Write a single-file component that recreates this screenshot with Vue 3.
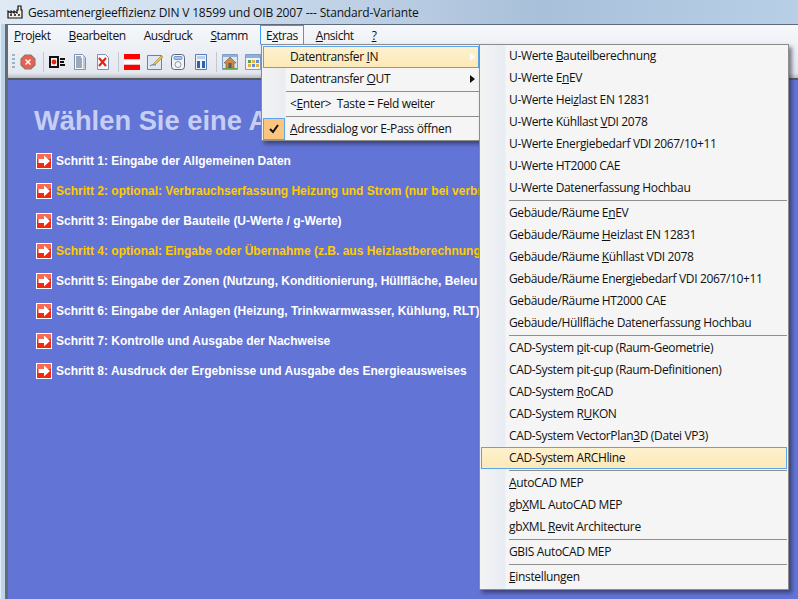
<script setup>
// Menüeinträge: & markiert den unterstrichenen Buchstaben, null ist ein Trennstrich
const menuBar = [
  { label: '&Projekt' },
  { label: '&Bearbeiten' },
  { label: 'Aus&druck' },
  { label: '&Stamm' },
  { label: 'E&xtras', open: true },
  { label: '&Ansicht' },
  { label: '&?' }
]

const extras = [
  { label: 'Datentransfer &IN', active: true, arrow: true },
  { label: 'Datentransfer &OUT', arrow: true },
  null,
  { label: '<&Enter>  Taste = Feld weiter' },
  null,
  { label: '&Adressdialog vor E-Pass öffnen', checked: true }
]

const transfer = [
  'U-Werte &Bauteilberechnung',
  'U-Werte E&nEV',
  'U-Werte Hei&zlast EN 12831',
  'U-Werte Kühllast &VDI 2078',
  'U-Werte Ener&giebedarf VDI 2067/10+11',
  'U-Werte HT2000 CAE',
  'U-Werte Datenerfassung Hochbau',
  null,
  'Gebäude/Räume E&nEV',
  'Gebäude/Räume &Heizlast EN 12831',
  'Gebäude/Räume &Kühllast VDI 2078',
  'Gebäude/Räume Energ&iebedarf VDI 2067/10+11',
  'Gebäude/Räume HT2000 CAE',
  'Gebäude/Hüllfläche Datenerfassung Hochbau',
  null,
  'CAD-System &pit-cup (Raum-Geometrie)',
  'CAD-System pit-&cup (Raum-Definitionen)',
  'CAD-System &RoCAD',
  'CAD-System R&UKON',
  'CAD-System VectorPlan&3D (Datei VP3)',
  'CAD-System ARCHline',
  null,
  '&AutoCAD MEP',
  'gb&XML AutoCAD MEP',
  'gbXML &Revit Architecture',
  null,
  'GBIS AutoCAD MEP',
  null,
  '&Einstellungen'
]

// Texte enden dort, wo das geöffnete Menü sie verdeckt
const steps = [
  { text: 'Schritt 1: Eingabe der Allgemeinen Daten' },
  { text: 'Schritt 2: optional: Verbrauchserfassung Heizung und Strom (nur bei verbra', optional: true },
  { text: 'Schritt 3: Eingabe der Bauteile (U-Werte / g-Werte)' },
  { text: 'Schritt 4: optional: Eingabe oder Übernahme (z.B. aus Heizlastberechnung', optional: true },
  { text: 'Schritt 5: Eingabe der Zonen (Nutzung, Konditionierung, Hüllfläche, Beleu' },
  { text: 'Schritt 6: Eingabe der Anlagen (Heizung, Trinkwarmwasser, Kühlung, RLT)' },
  { text: 'Schritt 7: Kontrolle und Ausgabe der Nachweise' },
  { text: 'Schritt 8: Ausdruck der Ergebnisse und Ausgabe des Energieausweises' }
]

const split = (label) => {
  const i = label.indexOf('&')
  if (i < 0) return { before: label, key: '', after: '' }
  return { before: label.slice(0, i), key: label[i + 1], after: label.slice(i + 2) }
}
</script>

<template>
  <div class="screen">
    <header class="titlebar">
      <svg class="app-icon" width="17" height="14" viewBox="0 0 17 14">
        <path d="M1 13V6l3 2V6l3 2V6l3 2V5h1V1h3v4h1v8z" fill="#f4f1e4" stroke="#111" stroke-width="1.2" />
        <path d="M3 10h2M7 10h2M11 10h2" stroke="#111" stroke-width="1.4" />
      </svg>
      <span>Gesamtenergieeffizienz DIN V 18599 und OIB 2007 --- Standard-Variante</span>
    </header>

    <div class="window">
      <nav class="menubar">
        <span v-for="item in menuBar" :key="item.label" class="menu-title" :class="{ open: item.open }">
          <span>{{ split(item.label).before }}<u>{{ split(item.label).key }}</u>{{ split(item.label).after }}</span>
        </span>
      </nav>

      <div class="toolbar">
        <span class="grip"></span>
        <svg class="tool" viewBox="0 0 16 16">
          <path d="M5 1h6l4 4v6l-4 4H5l-4-4V5z" fill="#e8604e" stroke="#8a7a70" stroke-width="1.2" />
          <path d="M5.500 5.500l5 5M10.500 5.500l-5 5" stroke="#fff" stroke-width="1.4" />
        </svg>
        <span class="tool-sep"></span>
        <svg class="tool" viewBox="0 0 16 16">
          <path d="M0 2h10v12H0z" fill="#111" />
          <path d="M2 4h6v8H2z" fill="#f1efe6" />
          <circle cx="5" cy="8" r="2.4" fill="#e02a1c" />
          <path d="M11 4h5v2h-5zM11 7h4v2h-4zM11 10h5v2h-5z" fill="#111" />
        </svg>
        <svg class="tool" viewBox="0 0 16 16">
          <path d="M2.500 .5h8l3 3v12h-11z" fill="#f6f8fb" stroke="#7d93b2" />
          <path d="M11 1v14l2-1V4z" fill="#b6c8de" />
          <path d="M4 3h5M4 5h6M4 7h6M4 9h6M4 11h6M4 13h6" stroke="#44597a" />
        </svg>
        <svg class="tool" viewBox="0 0 16 16">
          <path d="M2.500 .5h8l3 3v12h-11z" fill="#f6f8fb" stroke="#7d93b2" />
          <path d="M4 4l7 8M11 4l-7 8" stroke="#e0281a" stroke-width="2.200" />
        </svg>
        <span class="tool-sep"></span>
        <svg class="tool" viewBox="0 0 16 16">
          <path d="M0 0h16v5.500H0zM0 10.500h16V16H0z" fill="#fe0000" />
          <path d="M0 5.500h16v5H0z" fill="#fff" />
        </svg>
        <svg class="tool" viewBox="0 0 16 16">
          <path d="M.5 1.500h14v14H.5z" fill="#dce8f6" stroke="#5b85bd" />
          <path d="M3 12c2-2 4-1 6-1" stroke="#5b6f90" fill="none" />
          <path d="M7 9l7-7 2 1-7 7-3 1z" fill="#eec24a" stroke="#a08028" stroke-width=".6" />
        </svg>
        <svg class="tool" viewBox="0 0 16 16">
          <rect x="1.500" y=".5" width="13" height="15" rx="3" fill="#f3f5f8" stroke="#5a6475" />
          <rect x="4" y="2.500" width="8" height="3" rx="1" fill="#a9c6ee" stroke="#4b78c0" stroke-width=".7" />
          <circle cx="8" cy="10.500" r="3" fill="#f3f5f8" stroke="#8b95a5" />
        </svg>
        <svg class="tool" viewBox="0 0 16 16">
          <path d="M2.500 .5h11v15h-11z" fill="#eef3fa" stroke="#5a7fb5" />
          <path d="M4 2h8v3H4z" fill="#b9cfea" />
          <path d="M4 7h3v7H4zM9 7h3v7H9z" fill="#2f64ad" />
        </svg>
        <span class="tool-sep"></span>
        <svg class="tool" viewBox="0 0 16 16">
          <path d="M.5 .5h15v15H.5z" fill="#dbe6f4" stroke="#7f9cc4" />
          <path d="M1 1h14v2H1z" fill="#8fb0dc" />
          <path d="M8 3L2 9h2v5h8V9h2z" fill="#c98a4a" stroke="#7a5530" stroke-width=".6" />
          <path d="M6.500 9h3v5h-3z" fill="#5a5a5a" />
          <path d="M1 14h14v1H1z" fill="#6aa84f" />
        </svg>
        <svg class="tool" viewBox="0 0 16 16">
          <path d="M.5 .5h15v15H.5z" fill="#eef3fa" stroke="#7f9cc4" />
          <path d="M1 1h14v3H1z" fill="#8fb0dc" />
          <path d="M3 6h3v3H3z" fill="#5aa050" />
          <path d="M7 6h3v3H7z" fill="#e8b040" />
          <path d="M11 6h3v3h-3z" fill="#5f8fd0" />
          <path d="M3 10h3v3H3z" fill="#e8b040" />
          <path d="M7 10h3v3H7z" fill="#5f8fd0" />
          <path d="M11 10h3v3h-3z" fill="#e8b040" />
        </svg>
      </div>

      <main class="content">
        <h1 class="headline">Wählen Sie eine A</h1>
        <ul class="steps">
          <li v-for="step in steps" :key="step.text" class="step" :class="{ optional: step.optional }">
            <svg class="step-icon" viewBox="0 0 16 16">
              <rect x=".5" y=".5" width="15" height="15" fill="#ee2a12" stroke="#fff" />
              <path d="M1 1h14v5H1z" fill="#fb6a50" />
              <path d="M2.500 6h5.500V2.500L14 8l-6 5.500V10H2.500z" fill="#fff" />
            </svg>
            <span>{{ step.text }}</span>
          </li>
        </ul>
      </main>
    </div>

    <!-- aufgeklappte Menüs -->
    <div class="popup extras">
      <template v-for="(item, i) in extras" :key="i">
        <div v-if="!item" class="popup-sep"></div>
        <div v-else class="popup-item" :class="{ active: item.active }">
          <span v-if="item.checked" class="check">
            <svg width="12" height="10" viewBox="0 0 12 10">
              <path d="M2 5l3 3 5-7" fill="none" stroke="#111" stroke-width="2" />
            </svg>
          </span>
          <span class="label">{{ split(item.label).before }}<u>{{ split(item.label).key }}</u>{{ split(item.label).after }}</span>
          <i v-if="item.arrow" class="arrow"></i>
        </div>
      </template>
    </div>

    <div class="popup transfer">
      <template v-for="(label, i) in transfer" :key="i">
        <div v-if="!label" class="popup-sep"></div>
        <div v-else class="popup-item" :class="{ active: label === 'CAD-System ARCHline' }">
          <span class="label">{{ split(label).before }}<u>{{ split(label).key }}</u>{{ split(label).after }}</span>
        </div>
      </template>
    </div>
  </div>
</template>

<style scoped>
.screen {
  position: relative;
  display: flex;
  flex-direction: column;
  width: 798px;
  height: 599px;
  overflow: hidden;
  background: linear-gradient(90deg, #e4eef7 0 1px, #bdd5ec 1px);
  font-family: "Open Sans", "Noto Sans", sans-serif;
  font-size: 12px;
  color: #111;
}

.titlebar {
  display: flex;
  align-items: center;
  gap: 4px;
  height: 24px;
  padding-left: 7px;
  background: linear-gradient(90deg, #dfeaf5 0, #cfdeee 200px, #a9c0da 540px, #b8cfe8 798px);
  letter-spacing: -0.17px;
}

.app-icon {
  flex: none;
}

.window {
  flex: 1;
  display: flex;
  flex-direction: column;
  min-height: 0;
  margin-left: 5px;
  border-top: 1px solid #5f6b7a;
  border-left: 3px solid #666b70;
}

.menubar {
  display: flex;
  height: 20px;
  background: linear-gradient(#f6f8fb, #eef1f5);
  letter-spacing: -0.45px;
}

.menu-title {
  display: flex;
  align-items: center;
  white-space: pre;
  padding: 0 5px;
  margin-right: 6px;
  border: 1px solid transparent;
}

.menu-title.open {
  background: #f5f7fa;
  border-color: #3d9af0;
  border-bottom-color: transparent;
}

.toolbar {
  display: flex;
  align-items: center;
  height: 33px;
  padding-left: 4px;
  background: linear-gradient(#eef1f6, #e4e8ee 85%, #b8bcc2);
  border-bottom: 2px solid #555a60;
}

.grip {
  width: 3px;
  height: 16px;
  margin-right: 5px;
  background: repeating-linear-gradient(#9fb2cc 0 2px, transparent 2px 4px);
}

.tool {
  flex: none;
  width: 16px;
  height: 16px;
  margin-right: 7px;
}

.tool-sep {
  flex: none;
  width: 1px;
  height: 20px;
  margin-right: 5px;
  background: #c3c8d0;
}

.content {
  flex: 1;
  padding: 24px 0 0 28px;
  background: #6274d6;
  overflow: hidden;
  white-space: nowrap;
}

.headline {
  height: 34px;
  margin: 0 0 15px -2px;
  font-family: "Liberation Sans", Arial, sans-serif;
  font-size: 27.3px;
  font-weight: 700;
  line-height: 34px;
  color: #c6cff2;
}

.steps {
  display: flex;
  flex-direction: column;
  gap: 14px;
  margin: 0;
  padding: 0;
  list-style: none;
}

.step {
  display: flex;
  align-items: center;
  gap: 4px;
  height: 16px;
  font-family: "Liberation Sans", Arial, sans-serif;
  font-size: 12px;
  font-weight: 700;
  color: #fff;
}

.step.optional {
  color: #ffcc00;
}

.step-icon {
  flex: none;
  width: 16px;
  height: 16px;
}

.popup {
  position: absolute;
  top: 44px;
  border: 1px solid #8c8c8c;
  box-shadow: 3px 3px 4px rgba(30, 30, 50, 0.55);
  letter-spacing: -0.35px;
}

.extras {
  left: 261px;
  width: 218px;
  padding-top: 1px;
  background: linear-gradient(90deg, #f3f3f4 0, #e9ecf0 23px, #f5f5f5 24px);
}

.extras .popup-item {
  padding-left: 26px;
}

.extras .popup-sep::after {
  margin-left: 24px;
}

.transfer {
  left: 479px;
  width: 308px;
  height: 544px;
  background: linear-gradient(90deg, #f3f3f4 0, #e8edf3 25px, #f5f5f5 26px);
}

.popup-item {
  position: relative;
  display: flex;
  align-items: center;
  box-sizing: border-box;
  height: 22px;
  margin: 0 1px;
  padding-left: 27px;
  padding-bottom: 1px;
  border: 1px solid transparent;
}

.popup-item.active {
  background: linear-gradient(#fdf1cf, #fde9b8);
  border-color: #5aa5ee;
}

.label {
  white-space: pre;
}

.popup-sep {
  display: flex;
  align-items: center;
  height: 3px;
}

.popup-sep::after {
  content: "";
  flex: 1;
  height: 1px;
  margin: 0 1px 0 29px;
  background: #8f8f8f;
}

.check {
  position: absolute;
  left: 0;
  top: 0;
  display: flex;
  align-items: center;
  justify-content: center;
  width: 20px;
  height: 20px;
  background: #fcc57e;
  box-shadow: 0 0 0 1px #5aa5ee;
}

.arrow {
  position: absolute;
  left: 206px;
  top: 6px;
  border-left: 5px solid #111;
  border-top: 4px solid transparent;
  border-bottom: 4px solid transparent;
}

.active .arrow {
  border-left-color: #fff;
}
</style>

<style>
html,
body {
  margin: 0;
  overflow: hidden;
}
</style>
